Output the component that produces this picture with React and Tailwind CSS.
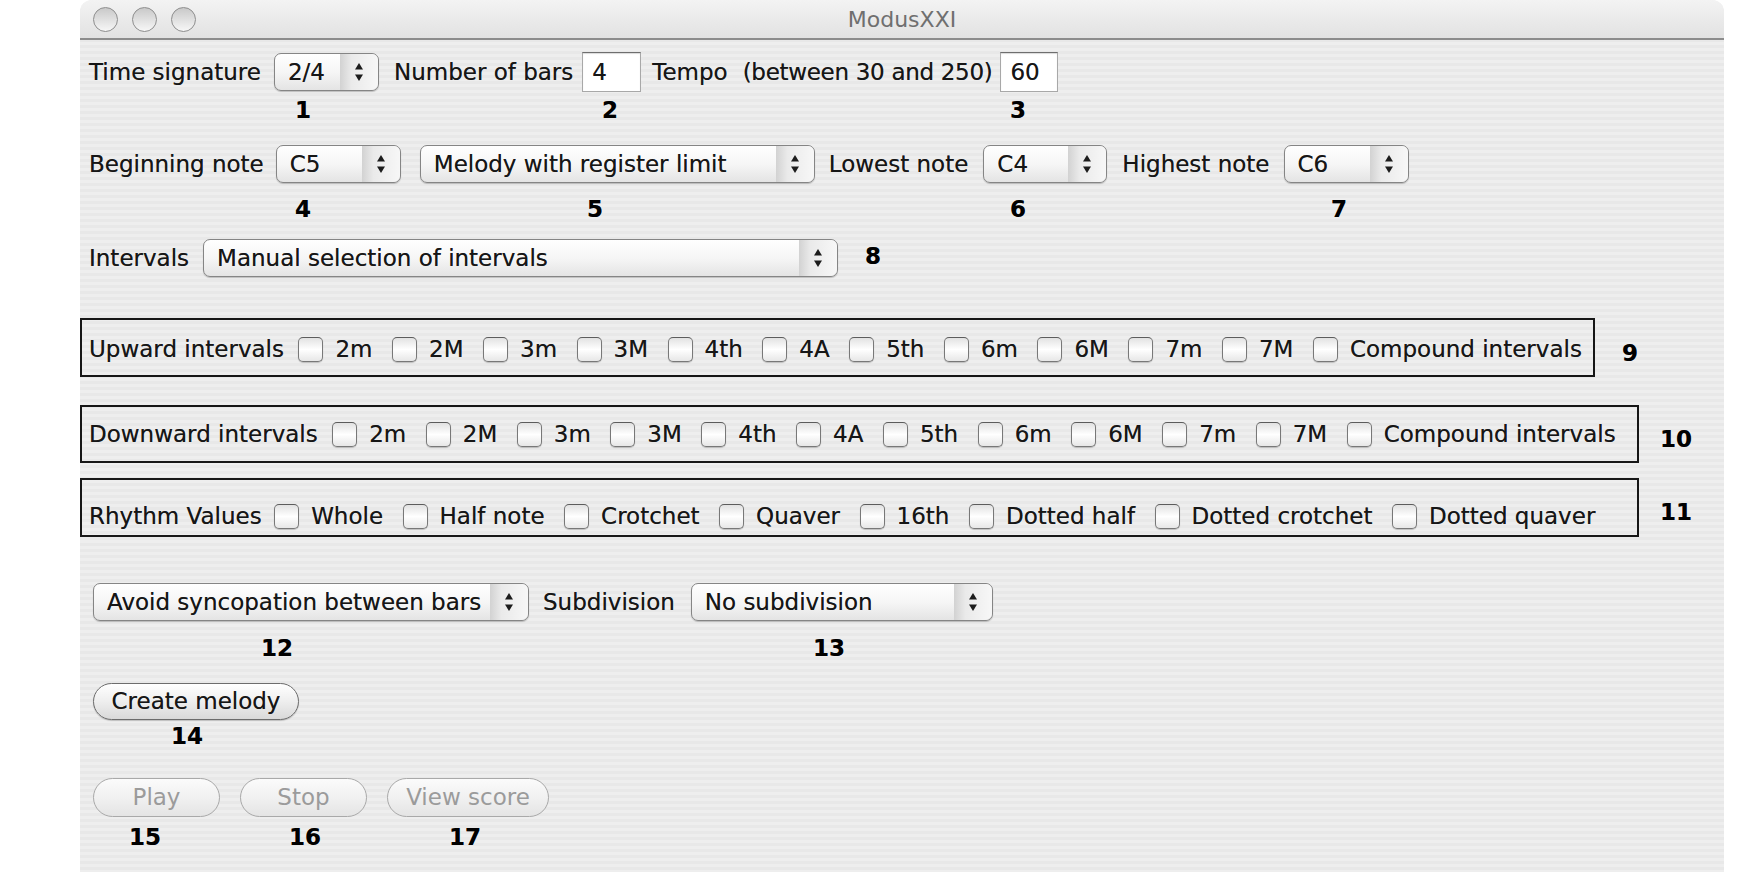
import React from "react";

// Aqua-like controls for the ModusXXI window
function Arrows() {
  return (
    <svg width="10" height="22" viewBox="0 0 10 22">
      <path d="M5 2 L9 8.5 H1 Z" fill="#1c1c1c" />
      <path d="M5 20 L9 13.5 H1 Z" fill="#1c1c1c" />
    </svg>
  );
}

function Select({ className, value }) {
  return (
    <div
      className={`${className} h-[38px] flex items-stretch rounded-[7px] border border-[#858585] bg-linear-to-b from-white via-[#f6f6f6] to-[#e4e4e4] shadow-[0_1px_1px_rgba(0,0,0,0.2)]`}
    >
      <span className="flex-1 pl-[13px] flex items-center whitespace-nowrap overflow-hidden">{value}</span>
      <span className="w-[38px] flex items-center justify-center rounded-r-[7px] bg-[linear-gradient(to_right,#d2d2d2,#eaeaea_30%,#f7f7f7)]">
        <Arrows />
      </span>
    </div>
  );
}

function TextField({ className, value }) {
  return (
    <div
      className={`${className} h-[40px] flex items-center pl-[9px] bg-white border border-[#a8a8a8] border-t-[#6e6e6e] shadow-[inset_0_1px_1px_rgba(0,0,0,0.15)]`}
    >
      {value}
    </div>
  );
}

function Checkbox() {
  return (
    <span className="w-[25px] h-[25px] shrink-0 rounded-[5px] border border-[#787878] border-t-[#5c5c5c] bg-linear-to-b from-[#e2e2e2] via-white to-[#e7e7e7] shadow-[0_1px_1px_rgba(0,0,0,0.2)]" />
  );
}

function Check({ label }) {
  return (
    <div className="flex items-center ml-[19.5px]">
      <Checkbox />
      <span className="ml-[12px] whitespace-nowrap">{label}</span>
    </div>
  );
}

function Button({ className, label, disabled }) {
  return (
    <div
      className={
        disabled
          ? `${className} h-[39px] rounded-full border border-[#a9a9a9] bg-linear-to-b from-[#fbfbfb] via-[#f1f1f1] to-[#e4e4e4] flex items-center justify-center text-[#9b9b9b] [text-shadow:none]`
          : `${className} h-[37px] rounded-full border border-[#6c6c6c] bg-linear-to-b from-white via-[#eeeeee] to-[#d9d9d9] flex items-center justify-center shadow-[0_1px_1px_rgba(0,0,0,0.2)]`
      }
    >
      {label}
    </div>
  );
}

function Num({ className, n }) {
  return <span className={`${className} w-[40px] text-center font-bold text-black`}>{n}</span>;
}

const intervals = ["2m", "2M", "3m", "3M", "4th", "4A", "5th", "6m", "6M", "7m", "7M", "Compound intervals"];
const rhythms = ["Whole", "Half note", "Crotchet", "Quaver", "16th", "Dotted half", "Dotted crotchet", "Dotted quaver"];

export default function App() {
  return (
    <div className="w-[1742px] h-[877px] bg-white overflow-hidden font-['DejaVu_Sans',sans-serif] text-[23px] text-[#161616] [text-shadow:0_0_0.6px_rgba(0,0,0,0.55)]">
      <div className="ml-[80px] w-[1644px] h-[872px] rounded-t-[12px] overflow-hidden flex flex-col bg-[repeating-linear-gradient(180deg,#eeeeee_0px,#eeeeee_3px,#e8e8e8_3px,#e8e8e8_6px)]">
        {/* title bar */}
        <div className="h-[40px] shrink-0 flex items-center border-b-2 border-[#8c8c8c] bg-linear-to-b from-[#f3f3f3] to-[#e2e2e2]">
          <div className="flex items-center gap-[14px] pl-[13px] w-[200px]">
            <span className="w-[25px] h-[25px] rounded-full border border-[#8d8d8d] bg-linear-to-b from-[#c9c9c9] to-[#f7f7f7]" />
            <span className="w-[25px] h-[25px] rounded-full border border-[#8d8d8d] bg-linear-to-b from-[#c9c9c9] to-[#f7f7f7]" />
            <span className="w-[25px] h-[25px] rounded-full border border-[#8d8d8d] bg-linear-to-b from-[#c9c9c9] to-[#f7f7f7]" />
          </div>
          <div className="flex-1 text-center text-[#6f6f6f] text-[22px] pr-[200px] [text-shadow:none]">ModusXXI</div>
        </div>

        {/* row 1 */}
        <div className="mt-[12px] h-[40px] flex items-center pl-[9px]">
          <span>Time signature</span>
          <Select className="w-[105px] ml-[13px]" value="2/4" />
          <span className="ml-[15px]">Number of bars</span>
          <TextField className="w-[59px] ml-[9px]" value="4" />
          <span className="ml-[11px]">Tempo</span>
          <span className="ml-[15px] tracking-[-0.3px]">(between 30 and 250)</span>
          <TextField className="w-[58px] ml-[8px]" value="60" />
        </div>
        <div className="mt-[6px] h-[24px] leading-[24px] flex">
          <Num className="ml-[203px]" n="1" />
          <Num className="ml-[267px]" n="2" />
          <Num className="ml-[368px]" n="3" />
        </div>

        {/* row 2 */}
        <div className="mt-[23px] h-[38px] flex items-center pl-[9px]">
          <span>Beginning note</span>
          <Select className="w-[125px] ml-[12px]" value="C5" />
          <Select className="w-[395px] ml-[19px]" value="Melody with register limit" />
          <span className="ml-[14px]">Lowest note</span>
          <Select className="w-[124px] ml-[15px]" value="C4" />
          <span className="ml-[15px]">Highest note</span>
          <Select className="w-[125px] ml-[14px]" value="C6" />
        </div>
        <div className="mt-[14px] h-[24px] leading-[24px] flex">
          <Num className="ml-[203px]" n="4" />
          <Num className="ml-[252px]" n="5" />
          <Num className="ml-[383px]" n="6" />
          <Num className="ml-[281px]" n="7" />
        </div>

        {/* row 3 */}
        <div className="mt-[18px] h-[38px] flex items-center pl-[9px]">
          <span>Intervals</span>
          <Select className="w-[635px] ml-[14px]" value="Manual selection of intervals" />
          <Num className="ml-[15px] -mt-[4px]" n="8" />
        </div>

        {/* upward */}
        <div className="mt-[41px] flex items-center">
          <div className="w-[1515px] h-[59px] border-2 border-[#161616] flex items-center pl-[7px] pt-[3px]">
            <span className="mr-[-5px]">Upward intervals</span>
            {intervals.map((i) => (
              <Check key={i} label={i} />
            ))}
          </div>
          <span className="ml-[27px] mt-[11px] font-bold text-black">9</span>
        </div>

        {/* downward */}
        <div className="mt-[28px] flex items-center">
          <div className="w-[1559px] h-[58px] border-2 border-[#161616] flex items-center pl-[7px]">
            <span className="mr-[-5px]">Downward intervals</span>
            {intervals.map((i) => (
              <Check key={i} label={i} />
            ))}
          </div>
          <span className="ml-[21px] mt-[10px] font-bold text-black">10</span>
        </div>

        {/* rhythm */}
        <div className="mt-[15px] flex items-center">
          <div className="w-[1559px] h-[59px] border-2 border-[#161616] flex items-center pl-[7px] pt-[17px]">
            <span className="mr-[-7px]">Rhythm Values</span>
            {rhythms.map((r) => (
              <Check key={r} label={r} />
            ))}
          </div>
          <span className="ml-[21px] mt-[10px] font-bold text-black">11</span>
        </div>

        {/* row 12 */}
        <div className="mt-[46px] h-[38px] flex items-center pl-[13px]">
          <Select className="w-[436px]" value="Avoid syncopation between bars" />
          <span className="ml-[14px]">Subdivision</span>
          <Select className="w-[302px] ml-[16px]" value="No subdivision" />
        </div>
        <div className="mt-[15px] h-[24px] leading-[24px] flex">
          <Num className="ml-[177px]" n="12" />
          <Num className="ml-[512px]" n="13" />
        </div>

        {/* create melody */}
        <div className="mt-[23px] flex pl-[13px]">
          <Button className="w-[206px]" label="Create melody" />
        </div>
        <div className="mt-[4px] h-[24px] leading-[24px] flex">
          <Num className="ml-[87px]" n="14" />
        </div>

        {/* play / stop / view */}
        <div className="mt-[30px] flex pl-[13px] gap-[20px]">
          <Button className="w-[127px]" label="Play" disabled />
          <Button className="w-[127px]" label="Stop" disabled />
          <Button className="w-[162px]" label="View score" disabled />
        </div>
        <div className="mt-[8px] h-[24px] leading-[24px] flex">
          <Num className="ml-[45px]" n="15" />
          <Num className="ml-[120px]" n="16" />
          <Num className="ml-[120px]" n="17" />
        </div>
      </div>
    </div>
  );
}
